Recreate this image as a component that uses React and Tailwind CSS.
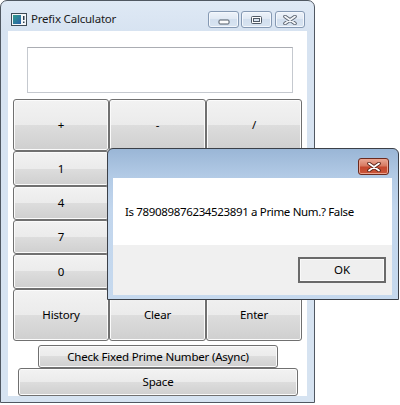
import React from "react";

const FONT = { fontFamily: '"Noto Sans", "Open Sans", sans-serif' };

function Btn({ children, className = "" }) {
  return (
    <div
      className={
        "flex items-center justify-center rounded-[3px] border border-[#707070] bg-[linear-gradient(to_bottom,#f2f2f2_0%,#ebebeb_50%,#dddddd_50%,#cfcfcf_100%)] shadow-[inset_0_0_0_1px_#fbfbfb] text-[11.5px] tracking-[-0.2px] text-black leading-none " +
        className
      }
    >
      {children}
    </div>
  );
}

function CapBtn({ children, className = "" }) {
  return (
    <div
      className={
        "flex items-center justify-center rounded-[3px] border border-[#8599b3] bg-[linear-gradient(to_bottom,#eef3fa_0%,#dfe8f3_50%,#d2dfee_50%,#d8e4f1_100%)] shadow-[inset_0_0_0_1px_#f3f7fc] " +
        className
      }
    >
      {children}
    </div>
  );
}

export default function App() {
  return (
    <div className="relative w-[400px] h-[405px] bg-white overflow-hidden" style={FONT}>
      {/* Main window */}
      <div className="w-[315px] h-[403px] border border-[#505862] rounded-t-[7px] bg-[linear-gradient(to_bottom,#dfe9f5_0px,#d7e3f1_30px,#d6e3f1_100%)] flex flex-col">
        {/* title bar */}
        <div className="h-[30px] flex items-start relative">
          <svg className="absolute left-[10px] top-[12px]" width="16" height="13" viewBox="0 0 16 13">
            <defs>
              <linearGradient id="ig" x1="0" y1="0" x2="1" y2="1">
                <stop offset="0" stopColor="#2f9c8c" />
                <stop offset="1" stopColor="#2b5fa8" />
              </linearGradient>
            </defs>
            <rect x="0.5" y="0.5" width="15" height="12" fill="#f4f6f8" stroke="#3d4a55" />
            <rect x="2" y="2" width="8" height="9" fill="url(#ig)" />
            <rect x="12" y="3" width="1.5" height="4" fill="#2c3e50" />
            <rect x="12" y="8.5" width="1.5" height="1.5" fill="#2c3e50" />
          </svg>
          <span className="absolute left-[30px] top-[10px] text-[11.5px] text-[#1b1b1b] leading-[16px] tracking-[-0.2px]">
            Prefix Calculator
          </span>
          <div className="absolute left-[207px] top-[10px] flex">
            <CapBtn className="w-[31px] h-[17px] mr-[2px]">
              <svg width="12" height="6" viewBox="0 0 12 6" className="mt-[5px]">
                <rect x="1" y="1" width="10" height="4" rx="1" fill="#fdfdfd" stroke="#505a66" />
              </svg>
            </CapBtn>
            <CapBtn className="w-[31px] h-[17px] mr-[3px]">
              <svg width="11" height="8" viewBox="0 0 11 8">
                <rect x="0.5" y="0.5" width="10" height="7" rx="1" fill="#fdfdfd" stroke="#505a66" />
                <rect x="2.5" y="2.5" width="6" height="3" fill="#d8e3f0" stroke="#505a66" strokeWidth="1" />
              </svg>
            </CapBtn>
            <CapBtn className="w-[30px] h-[17px]">
              <svg width="14" height="10" viewBox="0 0 14 10">
                <path d="M2 1.5 L12 8.5 M12 1.5 L2 8.5" stroke="#5b6470" strokeWidth="3.6" strokeLinecap="round" />
                <path d="M2 1.5 L12 8.5 M12 1.5 L2 8.5" stroke="#f4f6f9" strokeWidth="1.8" strokeLinecap="round" />
              </svg>
            </CapBtn>
          </div>
        </div>
        {/* client */}
        <div className="ml-[7px] w-[299px] h-[365px] bg-white flex flex-col">
          <div className="ml-[19px] mt-[16px] w-[266px] h-[46px] border border-[#c5c9cf] border-t-[#abadb3] bg-white" />
          <div className="ml-[5px] mt-[6px] grid grid-cols-[96px_97px_96px] grid-rows-[52px_35px_34px_34px_35px_52px]">
            <Btn>+</Btn>
            <Btn>-</Btn>
            <Btn>/</Btn>
            <Btn>1</Btn>
            <Btn />
            <Btn />
            <Btn>4</Btn>
            <Btn />
            <Btn />
            <Btn>7</Btn>
            <Btn />
            <Btn />
            <Btn>0</Btn>
            <Btn />
            <Btn />
            <Btn>History</Btn>
            <Btn>Clear</Btn>
            <Btn>Enter</Btn>
          </div>
          <Btn className="ml-[30px] mt-[4px] w-[240px] h-[23px]">Check Fixed Prime Number (Async)</Btn>
          <Btn className="ml-[10px] w-[280px] h-[28px]">Space</Btn>
        </div>
      </div>

      {/* Message box dialog */}
      <div className="absolute left-[107px] top-[148px] w-[292px] h-[152px] border border-[#3b4048] rounded-t-[6px] bg-[linear-gradient(to_bottom,#9ab6d6_0px,#b3cbe6_28px,#c2d6ed_60px,#c6d9ee_100%)] flex flex-col pl-[5px] pr-[6px] pb-[4px]">
        <div className="h-[29px] relative">
          <div className="absolute right-[3px] top-[9px] w-[31px] h-[17px] rounded-[3px] border border-[#6b2a1e] bg-[linear-gradient(to_bottom,#e9a996_0%,#d77a62_45%,#c5482e_55%,#c9553a_100%)] shadow-[inset_0_0_0_1px_#eba38f] flex items-center justify-center">
            <svg width="14" height="10" viewBox="0 0 14 10">
              <path d="M2 1.5 L12 8.5 M12 1.5 L2 8.5" stroke="#5a2419" strokeWidth="3.6" strokeLinecap="round" />
              <path d="M2 1.5 L12 8.5 M12 1.5 L2 8.5" stroke="#ffffff" strokeWidth="1.8" strokeLinecap="round" />
            </svg>
          </div>
        </div>
        <div className="flex-1 flex flex-col">
          <div className="h-[67px] bg-white flex items-center pl-[12px] text-[11.5px] tracking-[-0.35px] text-black">
            Is 789089876234523891 a Prime Num.? False
          </div>
          <div className="flex-1 bg-[#f0f0f0] flex justify-end items-start pt-[12px] pr-[6px]">
            <div className="w-[88px] h-[26px] border-2 border-[#6a6a6a] bg-[#efefef] shadow-[inset_0_0_0_1px_#fafafa] flex items-center justify-center text-[11.5px] text-black">
              OK
            </div>
          </div>
        </div>
      </div>
    </div>
  );
}
